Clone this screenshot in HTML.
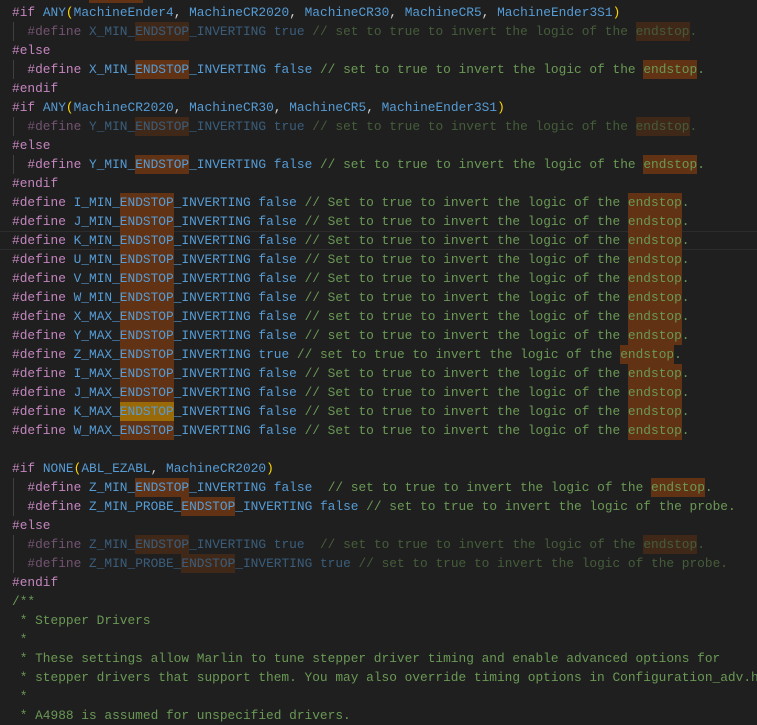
<!DOCTYPE html>
<html><head><meta charset="utf-8"><style>
body{margin:0;background:#1f1f1f;width:757px;height:714px;overflow:hidden;position:relative}
#ed{position:absolute;left:12px;top:-16.5px;font-family:"Liberation Mono",monospace;font-size:12.83px;line-height:19px;color:#d4d4d4}
.l{height:19px;position:relative;white-space:pre}
.k{color:#c586c0}.b{color:#569cd6}.c{color:#6a9955}.p{color:#ffd700}
.h,.cur{display:inline-block;height:19px;line-height:19px;vertical-align:top;background:#613214}.cur{background:#9a6a08}
.d{opacity:.5}
.g{position:absolute;left:1px;top:0;width:1px;height:19px;background:#404040}
#curl{position:absolute;left:0;right:0;top:230.5px;height:17px;border-top:1px solid #2c2c2c;border-bottom:1px solid #2c2c2c}
</style></head><body>
<div id="curl"></div>
<div id="ed">
<div class="l">          <span class="h">       </span></div>
<div class="l"><span class="k">#if</span> <span class="b">ANY</span><span class="p">(</span><span class="b">MachineEnder4</span>, <span class="b">MachineCR2020</span>, <span class="b">MachineCR30</span>, <span class="b">MachineCR5</span>, <span class="b">MachineEnder3S1</span><span class="p">)</span></div>
<div class="l"><span class="g"></span><span class="d">  <span class="k">#define</span> <span class="b">X_MIN_<span class="h">ENDSTOP</span>_INVERTING</span> <span class="b">true</span> <span class="c">// set to true to invert the logic of the <span class="h">endstop</span>.</span></span></div>
<div class="l"><span class="k">#else</span></div>
<div class="l"><span class="g"></span>  <span class="k">#define</span> <span class="b">X_MIN_<span class="h">ENDSTOP</span>_INVERTING</span> <span class="b">false</span> <span class="c">// set to true to invert the logic of the <span class="h">endstop</span>.</span></div>
<div class="l"><span class="k">#endif</span></div>
<div class="l"><span class="k">#if</span> <span class="b">ANY</span><span class="p">(</span><span class="b">MachineCR2020</span>, <span class="b">MachineCR30</span>, <span class="b">MachineCR5</span>, <span class="b">MachineEnder3S1</span><span class="p">)</span></div>
<div class="l"><span class="g"></span><span class="d">  <span class="k">#define</span> <span class="b">Y_MIN_<span class="h">ENDSTOP</span>_INVERTING</span> <span class="b">true</span> <span class="c">// set to true to invert the logic of the <span class="h">endstop</span>.</span></span></div>
<div class="l"><span class="k">#else</span></div>
<div class="l"><span class="g"></span>  <span class="k">#define</span> <span class="b">Y_MIN_<span class="h">ENDSTOP</span>_INVERTING</span> <span class="b">false</span> <span class="c">// set to true to invert the logic of the <span class="h">endstop</span>.</span></div>
<div class="l"><span class="k">#endif</span></div>
<div class="l"><span class="k">#define</span> <span class="b">I_MIN_<span class="h">ENDSTOP</span>_INVERTING</span> <span class="b">false</span> <span class="c">// Set to true to invert the logic of the <span class="h">endstop</span>.</span></div>
<div class="l"><span class="k">#define</span> <span class="b">J_MIN_<span class="h">ENDSTOP</span>_INVERTING</span> <span class="b">false</span> <span class="c">// Set to true to invert the logic of the <span class="h">endstop</span>.</span></div>
<div class="l"><span class="k">#define</span> <span class="b">K_MIN_<span class="h">ENDSTOP</span>_INVERTING</span> <span class="b">false</span> <span class="c">// Set to true to invert the logic of the <span class="h">endstop</span>.</span></div>
<div class="l"><span class="k">#define</span> <span class="b">U_MIN_<span class="h">ENDSTOP</span>_INVERTING</span> <span class="b">false</span> <span class="c">// Set to true to invert the logic of the <span class="h">endstop</span>.</span></div>
<div class="l"><span class="k">#define</span> <span class="b">V_MIN_<span class="h">ENDSTOP</span>_INVERTING</span> <span class="b">false</span> <span class="c">// Set to true to invert the logic of the <span class="h">endstop</span>.</span></div>
<div class="l"><span class="k">#define</span> <span class="b">W_MIN_<span class="h">ENDSTOP</span>_INVERTING</span> <span class="b">false</span> <span class="c">// Set to true to invert the logic of the <span class="h">endstop</span>.</span></div>
<div class="l"><span class="k">#define</span> <span class="b">X_MAX_<span class="h">ENDSTOP</span>_INVERTING</span> <span class="b">false</span> <span class="c">// set to true to invert the logic of the <span class="h">endstop</span>.</span></div>
<div class="l"><span class="k">#define</span> <span class="b">Y_MAX_<span class="h">ENDSTOP</span>_INVERTING</span> <span class="b">false</span> <span class="c">// set to true to invert the logic of the <span class="h">endstop</span>.</span></div>
<div class="l"><span class="k">#define</span> <span class="b">Z_MAX_<span class="h">ENDSTOP</span>_INVERTING</span> <span class="b">true</span> <span class="c">// set to true to invert the logic of the <span class="h">endstop</span>.</span></div>
<div class="l"><span class="k">#define</span> <span class="b">I_MAX_<span class="h">ENDSTOP</span>_INVERTING</span> <span class="b">false</span> <span class="c">// Set to true to invert the logic of the <span class="h">endstop</span>.</span></div>
<div class="l"><span class="k">#define</span> <span class="b">J_MAX_<span class="h">ENDSTOP</span>_INVERTING</span> <span class="b">false</span> <span class="c">// Set to true to invert the logic of the <span class="h">endstop</span>.</span></div>
<div class="l"><span class="k">#define</span> <span class="b">K_MAX_<span class="cur">ENDSTOP</span>_INVERTING</span> <span class="b">false</span> <span class="c">// Set to true to invert the logic of the <span class="h">endstop</span>.</span></div>
<div class="l"><span class="k">#define</span> <span class="b">W_MAX_<span class="h">ENDSTOP</span>_INVERTING</span> <span class="b">false</span> <span class="c">// Set to true to invert the logic of the <span class="h">endstop</span>.</span></div>
<div class="l"></div>
<div class="l"><span class="k">#if</span> <span class="b">NONE</span><span class="p">(</span><span class="b">ABL_EZABL</span>, <span class="b">MachineCR2020</span><span class="p">)</span></div>
<div class="l"><span class="g"></span>  <span class="k">#define</span> <span class="b">Z_MIN_<span class="h">ENDSTOP</span>_INVERTING</span> <span class="b">false</span>  <span class="c">// set to true to invert the logic of the <span class="h">endstop</span>.</span></div>
<div class="l"><span class="g"></span>  <span class="k">#define</span> <span class="b">Z_MIN_PROBE_<span class="h">ENDSTOP</span>_INVERTING</span> <span class="b">false</span> <span class="c">// set to true to invert the logic of the probe.</span></div>
<div class="l"><span class="k">#else</span></div>
<div class="l"><span class="g"></span><span class="d">  <span class="k">#define</span> <span class="b">Z_MIN_<span class="h">ENDSTOP</span>_INVERTING</span> <span class="b">true</span>  <span class="c">// set to true to invert the logic of the <span class="h">endstop</span>.</span></span></div>
<div class="l"><span class="g"></span><span class="d">  <span class="k">#define</span> <span class="b">Z_MIN_PROBE_<span class="h">ENDSTOP</span>_INVERTING</span> <span class="b">true</span> <span class="c">// set to true to invert the logic of the probe.</span></span></div>
<div class="l"><span class="k">#endif</span></div>
<div class="l c">/**</div>
<div class="l c"> * Stepper Drivers</div>
<div class="l c"> *</div>
<div class="l c"> * These settings allow Marlin to tune stepper driver timing and enable advanced options for</div>
<div class="l c"> * stepper drivers that support them. You may also override timing options in Configuration_adv.h</div>
<div class="l c"> *</div>
<div class="l c"> * A4988 is assumed for unspecified drivers.</div>
</div>
</body></html>
